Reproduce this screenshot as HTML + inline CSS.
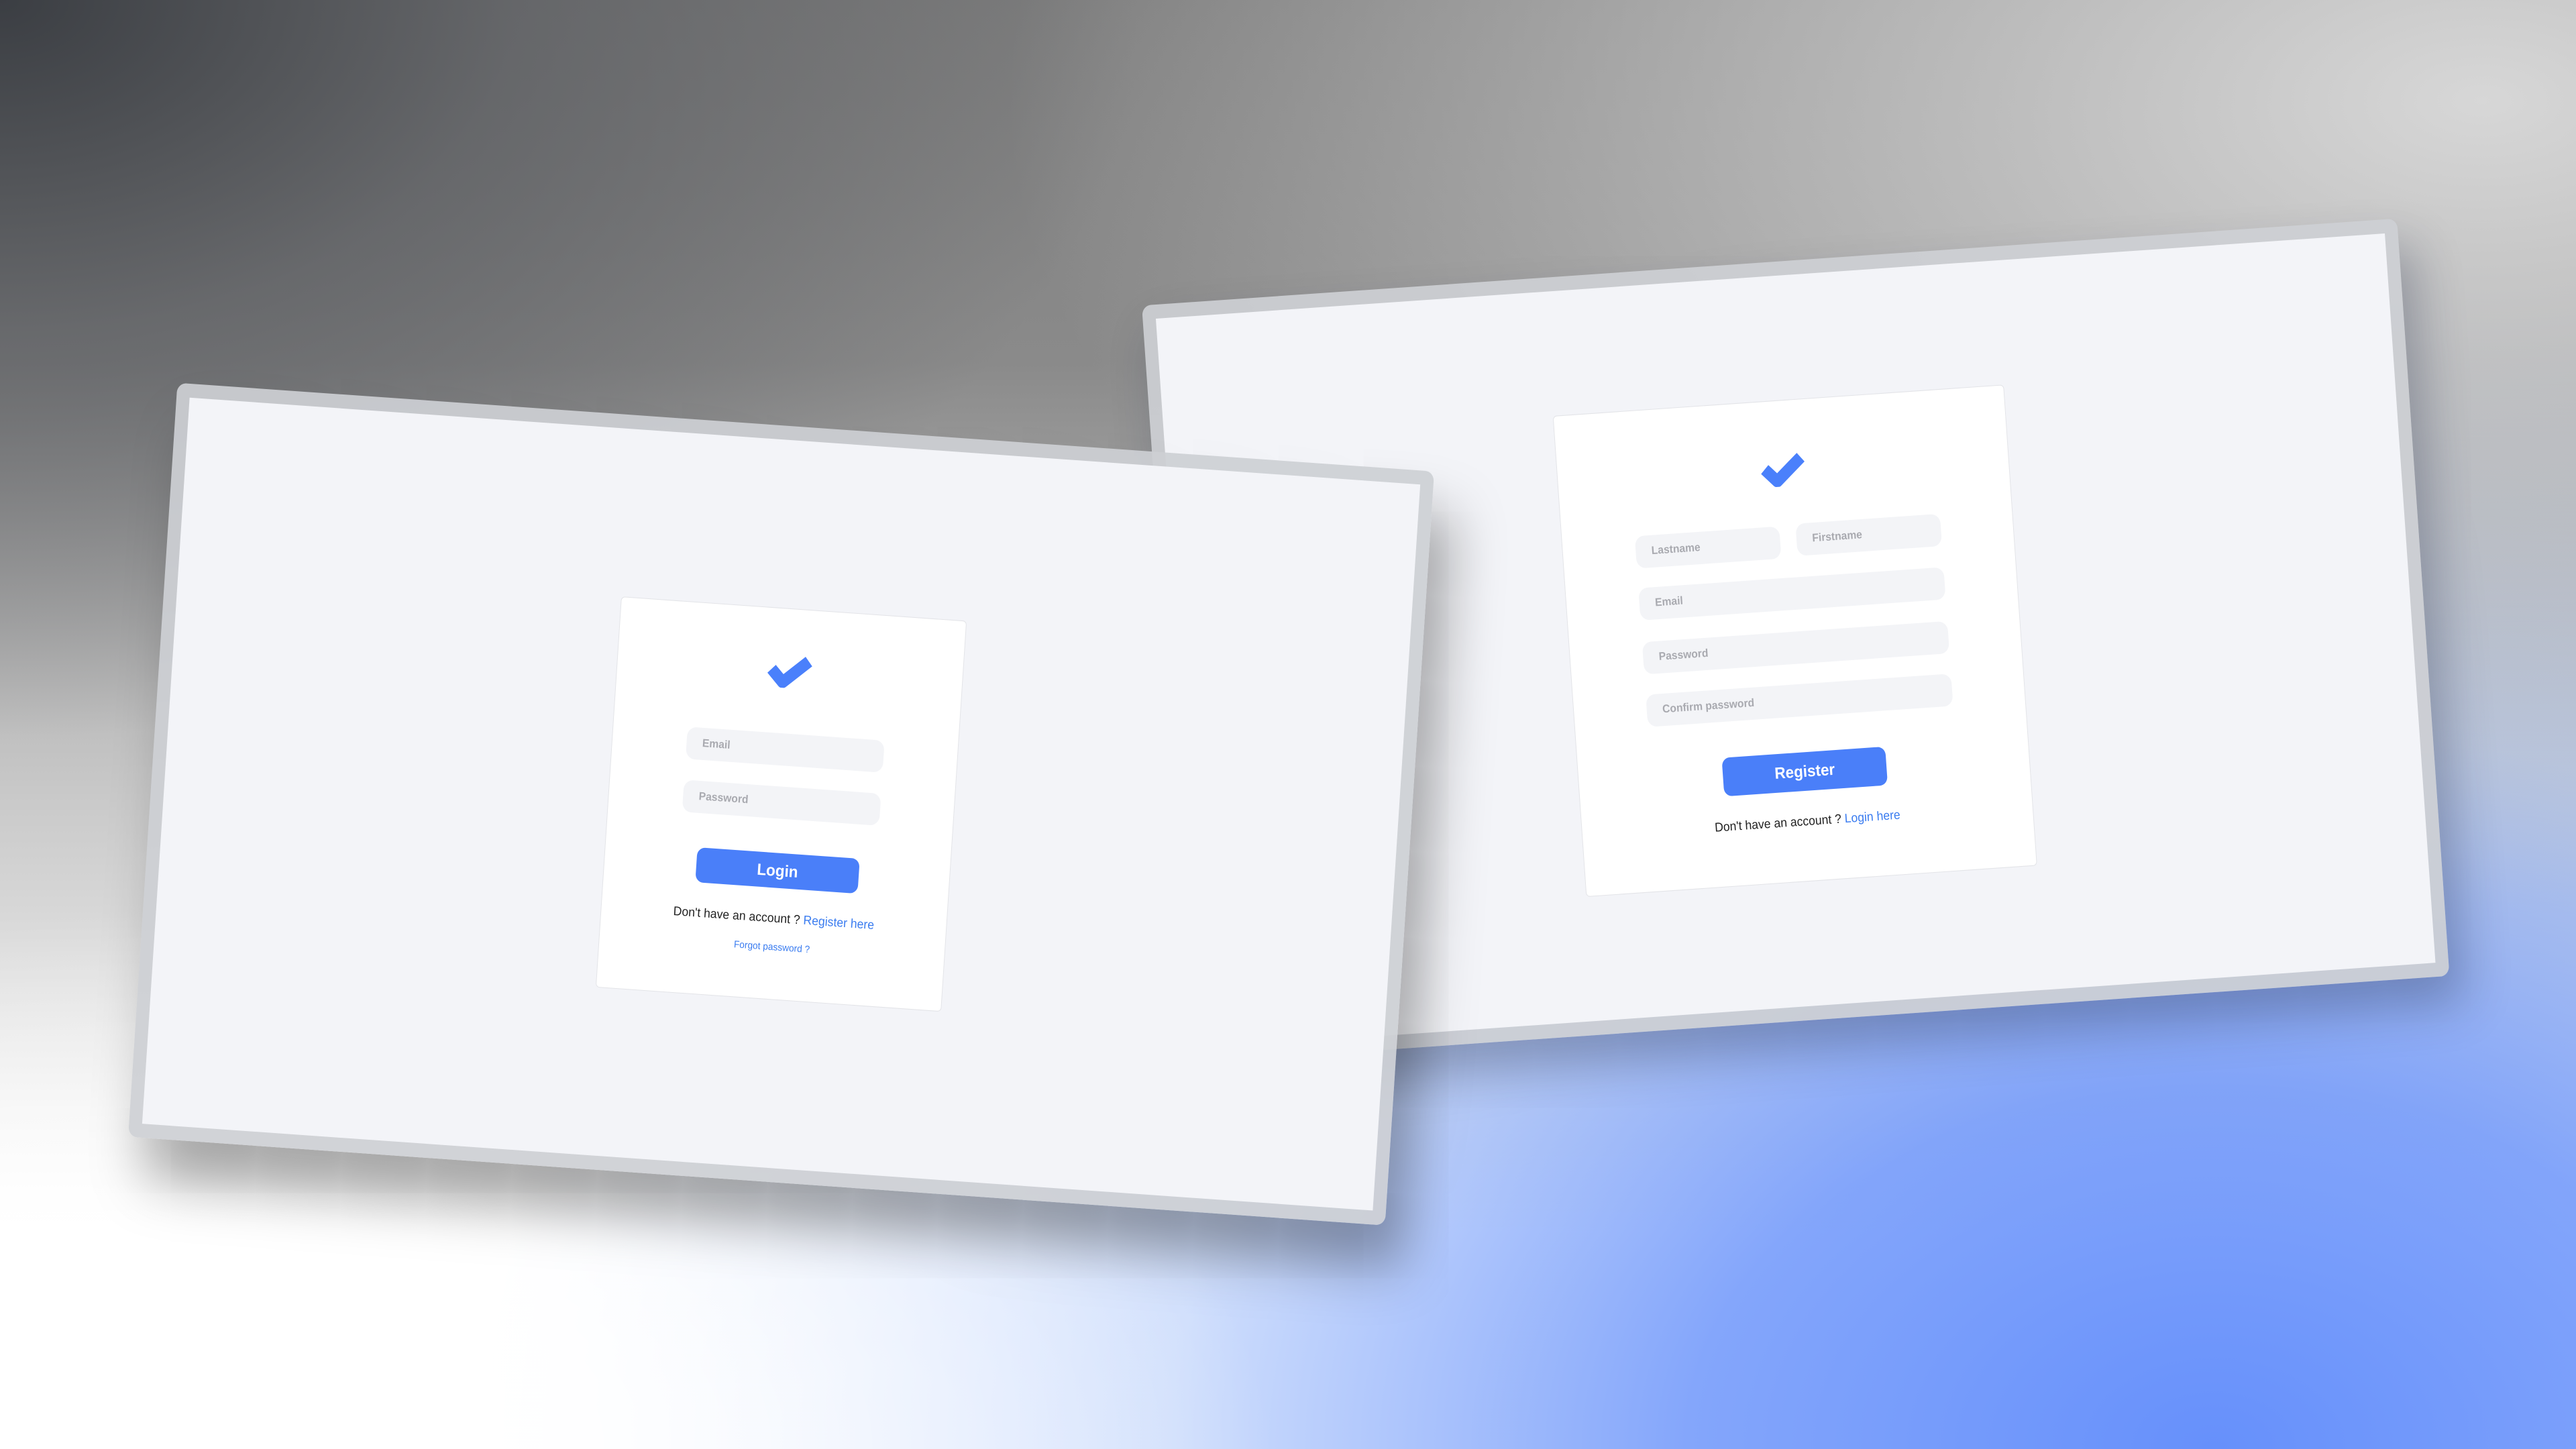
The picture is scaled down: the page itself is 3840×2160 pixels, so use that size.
<!DOCTYPE html>
<html><head><meta charset="utf-8"><style>
*{margin:0;padding:0;box-sizing:border-box}
html,body{width:3840px;height:2160px;overflow:hidden}
body{position:relative;font-family:"Liberation Sans",sans-serif;
background:
radial-gradient(ellipse 2600px 1800px at 3300px 2160px,#6690fb 0%,rgba(110,150,250,.85) 30%,rgba(160,190,250,.5) 60%,rgba(255,255,255,0) 100%),
radial-gradient(ellipse 1700px 1100px at 0px 0px,#3b3e43 0%,rgba(90,92,96,.7) 45%,rgba(128,128,128,0) 100%),
linear-gradient(180deg,#7e7e7e 0%,#8a8a8a 25%,#c9c9c9 55%,#ffffff 85%);}
.bgtr{position:absolute;left:0;top:0;width:3840px;height:2160px;
background:radial-gradient(ellipse 2200px 1200px at 3700px 150px,rgba(215,215,215,1) 0%,rgba(205,205,205,.6) 50%,rgba(200,200,200,0) 100%)}
.bgbl{position:absolute;left:0;top:0;width:3840px;height:2160px;
background:radial-gradient(ellipse 1700px 800px at 200px 2160px,#fff 0%,rgba(255,255,255,.85) 40%,rgba(255,255,255,0) 100%)}
.scr{position:absolute;left:0;top:0;width:1920px;height:1080px;transform-origin:0 0;
background:rgba(205,207,212,.92);border-radius:14px;padding:20px}
.in{position:absolute;left:20px;top:20px;right:20px;bottom:20px;background:#f3f4f8}
#s1{transform:matrix(0.9758,0.06885,-0.06806,1.0407,264.5,570.6);box-shadow:30px 60px 80px rgba(0,0,0,.35)}
#s2{transform:matrix(0.9745,-0.0676,0.0726,1.0454,1702,455.5);box-shadow:20px 40px 70px rgba(20,30,60,.3)}
.card{position:absolute;background:#fff;border:1px solid #e3e4e8;border-radius:6px}
.f{position:absolute;height:46px;background:#f3f4f7;border-radius:14px;color:#a9aab0;font-size:16px;font-weight:bold;line-height:46px;padding-left:24px}
.b{position:absolute;background:#4a7ff9;border-radius:12px;color:#fff;font-weight:bold;text-align:center}
.t{position:absolute;left:0;right:0;text-align:center;color:#222;font-size:18px}
.t span,.l{color:#3a7cf0}
.ck{position:absolute}
</style></head><body>
<div class="bgtr"></div><div class="bgbl"></div>

<div class="scr" id="s2"><div class="in"></div>
 <div class="card" style="left:614px;top:197px;width:690px;height:686px">
  <svg class="ck" style="left:310px;top:72px" width="70" height="50" viewBox="0 0 70 50"><path d="M6 24 L24 42 L62 10" fill="none" stroke="#4a80fb" stroke-width="17" stroke-linejoin="round"/></svg>
  <div class="f" style="left:111px;top:178px;width:221px">Lastname</div>
  <div class="f" style="left:357px;top:176px;width:221px">Firstname</div>
  <div class="f" style="left:111px;top:252px;width:467px">Email</div>
  <div class="f" style="left:111px;top:329px;width:467px">Password</div>
  <div class="f" style="left:111px;top:404px;width:467px">Confirm password</div>
  <div class="b" style="left:220px;top:501px;width:250px;height:55px;line-height:55px;font-size:23px">Register</div>
  <div class="t" style="top:589px">Don't have an account ? <span>Login here</span></div>
 </div>
</div>

<div class="scr" id="s1"><div class="in"></div>
 <div class="card" style="left:696px;top:260px;width:528px;height:560px">
  <svg class="ck" style="left:229px;top:63px" width="70" height="50" viewBox="0 0 70 50"><path d="M6 24 L24 42 L62 10" fill="none" stroke="#4a80fb" stroke-width="17" stroke-linejoin="round"/></svg>
  <div class="f" style="left:113px;top:178px;width:301px">Email</div>
  <div class="f" style="left:113px;top:254px;width:301px">Password</div>
  <div class="b" style="left:140px;top:349px;width:248px;height:50px;line-height:50px;font-size:23px">Login</div>
  <div class="t" style="top:432px">Don't have an account ? <span>Register here</span></div>
  <div class="t l" style="top:475px;font-size:14px;color:#3a7cf0">Forgot password ?</div>
 </div>
</div>
</body></html>
